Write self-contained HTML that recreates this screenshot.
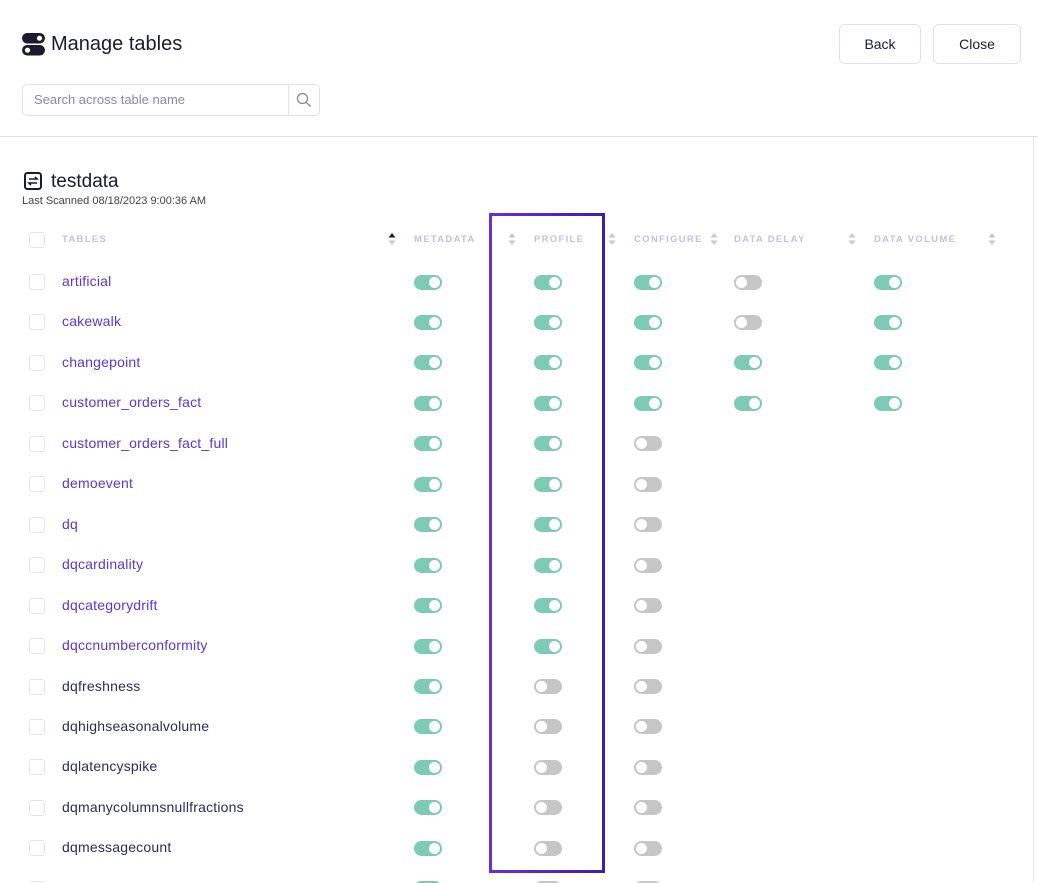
<!DOCTYPE html>
<html><head><meta charset="utf-8"><style>
*{margin:0;padding:0;box-sizing:border-box}
html,body{width:1038px;height:883px;overflow:hidden}
body{background:#fff;font-family:"Liberation Sans",sans-serif;position:relative;color:#1b1b2f}
.a{position:absolute}
.btn{position:absolute;top:24px;height:40px;border:1px solid #dfe2ec;border-radius:6px;font-size:14px;display:flex;align-items:center;justify-content:center;color:#1b1b2f}
.hd{position:absolute;top:234px;font-size:9.5px;font-weight:bold;letter-spacing:1.3px;color:#c3c1dc}
.srt{position:absolute;top:232px;width:8px;height:14px}
.cb{position:absolute;left:29px;width:16px;height:16px;border:1px solid #e3e5ee;border-radius:3px}
.nm{position:absolute;left:62px;font-size:14px;letter-spacing:.2px}
.t{position:absolute;width:28px;height:15px;border-radius:8px}
.t:after{content:"";position:absolute;top:2px;width:11px;height:11px;border-radius:50%;background:#fff}
.on{background:#7dcab5}.on:after{right:2px}
.off{background:#c6c6c6}.off:after{left:2px}
</style></head><body>
<svg class="a" style="left:22px;top:33px" width="24" height="23" viewBox="0 0 24 23"><rect x="0" y="0" width="23" height="10.5" rx="5.2" fill="#1b1b2f"/><rect x="0" y="12" width="23" height="10.5" rx="5.2" fill="#1b1b2f"/><circle cx="17.5" cy="5.2" r="2.6" fill="#fff"/><circle cx="5.5" cy="17.2" r="2.6" fill="#fff"/></svg>
<div class="a" style="left:51px;top:33px;font-size:20px;color:#1b1b2f">Manage tables</div>
<div class="btn" style="left:839px;width:82px">Back</div>
<div class="btn" style="left:933px;width:88px">Close</div>
<div class="a" style="left:22px;top:84px;width:298px;height:32px;border:1px solid #dfe2ec;border-radius:5px"></div>
<div class="a" style="left:288px;top:85px;width:1px;height:30px;background:#e3e5ee"></div>
<div class="a" style="left:34px;top:92px;font-size:13px;color:#8a8a98">Search across table name</div>
<svg class="a" style="left:296px;top:92px" width="16" height="16" viewBox="0 0 16 16"><circle cx="6.5" cy="6.5" r="5" fill="none" stroke="#888" stroke-width="1.3"/><path d="M10.2 10.2L14.5 14.5" stroke="#888" stroke-width="1.3"/></svg>
<div class="a" style="left:0;top:136px;width:1038px;height:1px;background:#dde3e8"></div>
<div class="a" style="left:1033px;top:137px;width:1px;height:746px;background:#e6e8ec"></div>
<svg class="a" style="left:24px;top:172px" width="18" height="18" viewBox="0 0 18 18"><rect x="1" y="1" width="16" height="16" rx="2.5" fill="none" stroke="#1b1b2f" stroke-width="2"/><path d="M5 7h8l-2-2M13 11H5l2 2" fill="none" stroke="#1b1b2f" stroke-width="1.6"/></svg>
<div class="a" style="left:51px;top:171px;font-size:19px;color:#1b1b2f">testdata</div>
<div class="a" style="left:22px;top:195px;font-size:11px;color:#444">Last Scanned 08/18/2023 9:00:36 AM</div>
<div class="cb" style="top:232px"></div>
<div class="hd" style="left:62px">TABLES</div>
<div class="hd" style="left:414px">METADATA</div>
<div class="hd" style="left:534px">PROFILE</div>
<div class="hd" style="left:634px">CONFIGURE</div>
<div class="hd" style="left:734px">DATA DELAY</div>
<div class="hd" style="left:874px">DATA VOLUME</div>
<svg class="srt" style="left:388px" viewBox="0 0 8 14"><path d="M4 1L7.5 5.5H.5z" fill="#1b1b2f"/><path d="M4 13L7.5 8.5H.5z" fill="#c8c8c8"/></svg>
<svg class="srt" style="left:508px" viewBox="0 0 8 14"><path d="M4 1L7.5 5.5H.5z" fill="#c8c8c8"/><path d="M4 13L7.5 8.5H.5z" fill="#c8c8c8"/></svg>
<svg class="srt" style="left:608px" viewBox="0 0 8 14"><path d="M4 1L7.5 5.5H.5z" fill="#c8c8c8"/><path d="M4 13L7.5 8.5H.5z" fill="#c8c8c8"/></svg>
<svg class="srt" style="left:710px" viewBox="0 0 8 14"><path d="M4 1L7.5 5.5H.5z" fill="#c8c8c8"/><path d="M4 13L7.5 8.5H.5z" fill="#c8c8c8"/></svg>
<svg class="srt" style="left:848px" viewBox="0 0 8 14"><path d="M4 1L7.5 5.5H.5z" fill="#c8c8c8"/><path d="M4 13L7.5 8.5H.5z" fill="#c8c8c8"/></svg>
<svg class="srt" style="left:988px" viewBox="0 0 8 14"><path d="M4 1L7.5 5.5H.5z" fill="#c8c8c8"/><path d="M4 13L7.5 8.5H.5z" fill="#c8c8c8"/></svg>

<div id="rows"></div>
<script>
var names=["artificial","cakewalk","changepoint","customer_orders_fact","customer_orders_fact_full","demoevent","dq","dqcardinality","dqcategorydrift","dqccnumberconformity","dqfreshness","dqhighseasonalvolume","dqlatencyspike","dqmanycolumnsnullfractions","dqmessagecount",""];
var h="";
for(var i=0;i<16;i++){
 var y=282+i*40.45;
 h+='<div class="cb" style="top:'+(y-8)+'px"></div>';
 if(names[i]) h+='<div class="nm" style="top:'+(y-9)+'px;color:'+(i<10?'#5a35e0':'#2d2b5a')+'">'+names[i]+'</div>';
 function tg(x,on){h+='<div class="t '+(on?'on':'off')+'" style="left:'+x+'px;top:'+(y-7.5)+'px"></div>';}
 tg(414,true);tg(534,i<10);tg(634,i<4);
 if(i<4){tg(734,i>=2);tg(874,true);}
}
document.getElementById("rows").innerHTML=h;
</script>
<div class="a" style="left:489px;top:213px;width:116px;height:660px;border:3px solid #5a2ccf;border-image:linear-gradient(90deg,#6a2fcc,#3a1fb5) 1"></div>
</body></html>
